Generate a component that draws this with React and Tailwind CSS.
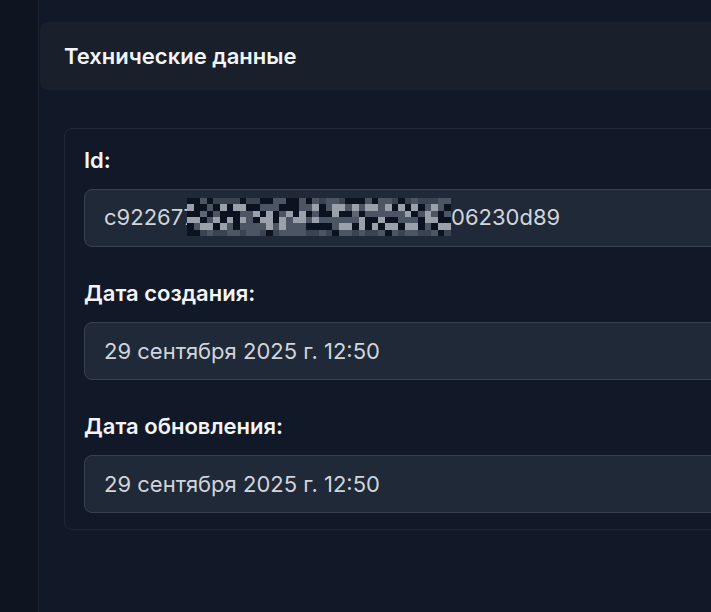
import React from "react";

function Mosaic() {
  const cols = 40;
  const rows = 6;
  const cw = 264 / cols;
  const ch = 38 / rows;
  const palette = ["#0b1220", "#1f2937", "#2b3444", "#3a4352", "#4b5563", "#5d6673", "#6b7280", "#808894", "#9aa1ab", "#151c28", "#4a4036", "#6b5a48"];
  const cells = [];
  let seed = 7;
  for (let r = 0; r < rows; r++) {
    for (let c = 0; c < cols; c++) {
      seed = (seed * 1103515245 + 12345) % 2147483648;
      let idx = seed % palette.length;
      if ((r === 0 || r === rows - 1) && idx > 6) idx = idx % 5;
      cells.push(
        <rect key={r + "-" + c} x={c * cw} y={r * ch} width={cw + 0.5} height={ch + 0.5} fill={palette[idx]} />
      );
    }
  }
  return (
    <svg width="264" height="38" viewBox="0 0 264 38" className="relative inline-block align-middle -mt-[3px] -ml-[9px]" shapeRendering="crispEdges">
      {cells}
    </svg>
  );
}

function Field({ label, children }) {
  return (
    <div className="flex flex-col">
      <div className="text-[22px] leading-7 font-semibold text-[#f3f4f6] mb-[15px]">{label}</div>
      <div className="flex h-[58px] items-center rounded-lg border border-[#374151] bg-[#1f2937] px-[19px] text-[22px] leading-7 text-[#d1d5db]">
        {children}
      </div>
    </div>
  );
}

export default function App() {
  return (
    <div
      className="flex min-h-[612px] w-[711px] overflow-hidden bg-[#111827]"
      style={{ fontFamily: "Inter, 'Noto Sans', sans-serif" }}
    >
      <aside className="w-[39px] shrink-0 border-r border-[#1c2431] bg-[#0f1520]" />
      <main className="flex-1 min-w-0 pl-px pt-[22px]">
        <div className="w-[720px] rounded-l-lg bg-[#19202c] px-6 py-5">
          <h2 className="text-[22px] leading-7 font-semibold text-[#f3f4f6]">Технические данные</h2>
        </div>
        <div className="pl-6 pt-[38px]">
          <div className="w-[700px] rounded-l-lg border border-[#1f2937] px-[19px] pt-[17px] pb-4">
            <div className="flex flex-col gap-8">
              <Field label="Id:">
                <span className="whitespace-nowrap">
                  c922677
                  <Mosaic />
                  06230d89
                </span>
              </Field>
              <Field label="Дата создания:">29 сентября 2025 г. 12:50</Field>
              <Field label="Дата обновления:">29 сентября 2025 г. 12:50</Field>
            </div>
          </div>
        </div>
      </main>
    </div>
  );
}
